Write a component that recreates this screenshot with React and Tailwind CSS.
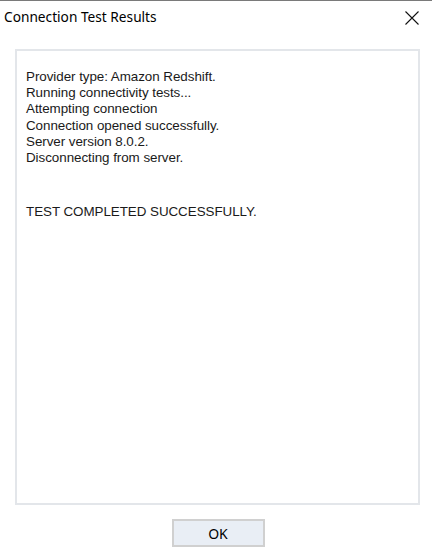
import React from 'react';

const lines = [
  'Provider type: Amazon Redshift.',
  'Running connectivity tests...',
  'Attempting connection',
  'Connection opened successfully.',
  'Server version 8.0.2.',
  'Disconnecting from server.',
];

export default function App() {
  return (
    <div className="w-[432px] h-[555px] bg-white border-t border-[#7a7a7a] flex flex-col overflow-hidden">
      {/* Title bar */}
      <div className="h-[33px] flex items-center justify-between pl-[4px] pr-[12px]">
        <span className="text-[13.7px] text-black" style={{ fontFamily: '"Noto Sans", "Open Sans", sans-serif' }}>
          Connection Test Results
        </span>
        <svg width="16" height="16" viewBox="0 0 16 16" className="mt-[1px]">
          <path d="M1.5 1.5 L14.5 14.5 M14.5 1.5 L1.5 14.5" stroke="#111" strokeWidth="1.1" />
        </svg>
      </div>

      {/* Results box */}
      <div className="mt-[15px] ml-[15px] w-[405px] h-[456px] border-2 border-[#e3e6ea] bg-white pt-[18px] pl-[9px]">
        <div className="text-[13.4px] leading-[16.2px] text-[#1a1a1a] tracking-[-0.05px]" style={{ fontFamily: '"Liberation Sans", Arial, sans-serif' }}>
          {lines.map((l, i) => (
            <div key={i} className="whitespace-pre">{l}</div>
          ))}
          <div className="mt-[38px]">TEST COMPLETED SUCCESSFULLY.</div>
        </div>
      </div>

      {/* Footer */}
      <div className="flex justify-center pt-[14px] pl-[4px]">
        <button className="w-[93px] h-[28px] border-2 border-[#d0d0d0] bg-[#e9eef5] text-[14px] text-black" style={{ fontFamily: '"Noto Sans", "Open Sans", sans-serif' }}>
          OK
        </button>
      </div>
    </div>
  );
}
